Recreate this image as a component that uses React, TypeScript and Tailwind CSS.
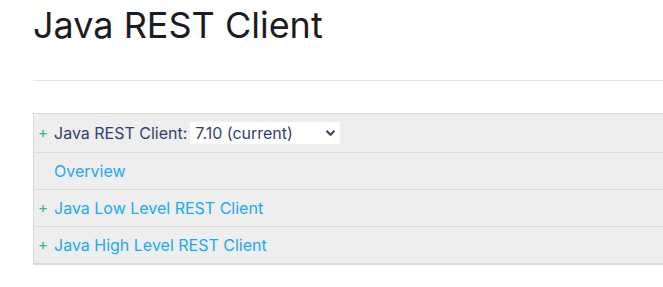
const rows = [
  { plus: true, label: "Java Low Level REST Client" },
  { plus: true, label: "Java High Level REST Client" },
];

function Plus() {
  return <span className="w-[20px] shrink-0 pl-[4px] text-[15px] text-[#2fb7a0]">+</span>;
}

export default function App() {
  return (
    <div className="h-[287px] w-[663px] overflow-hidden bg-white font-['Inter',sans-serif]">
      <div className="pl-[33px]">
        <h1 className="pt-[3px] text-[36px] leading-[45px] font-normal text-[#1a1c21]">Java REST Client</h1>
        <div className="mt-[32px] h-px bg-[#e3e3e3]" />
        <div className="mt-[32px] border-t border-l border-b-2 border-[#d9d9d9] bg-[#eeeeee] text-[16px]">
          <div className="flex h-[39px] items-center border-b border-[#dcdcdc]">
            <Plus />
            <span className="text-[#343f6e]">Java REST Client:</span>
            <div className="ml-[3px] flex h-[22px] w-[150px] items-center justify-between bg-white pl-[5px] pr-[3px] text-[#343f6e]">
              <span>7.10 (current)</span>
              <svg width="11" height="8" viewBox="0 0 11 8" className="mr-[1px]">
                <path d="M1.5 1.8 L5.5 5.8 L9.5 1.8" fill="none" stroke="#343f6e" strokeWidth="2" />
              </svg>
            </div>
          </div>
          <div className="flex h-[37px] items-center border-b border-[#dcdcdc]">
            <span className="w-[20px] shrink-0" />
            <span className="text-[#1ba9f5]">Overview</span>
          </div>
          {rows.map((r, i) => (
            <div key={r.label} className={`flex items-center ${i === 0 ? "h-[37px] border-b border-[#dcdcdc]" : "h-[36px]"}`}>
              <Plus />
              <span className="text-[#1ba9f5]">{r.label}</span>
            </div>
          ))}
        </div>
      </div>
    </div>
  );
}
